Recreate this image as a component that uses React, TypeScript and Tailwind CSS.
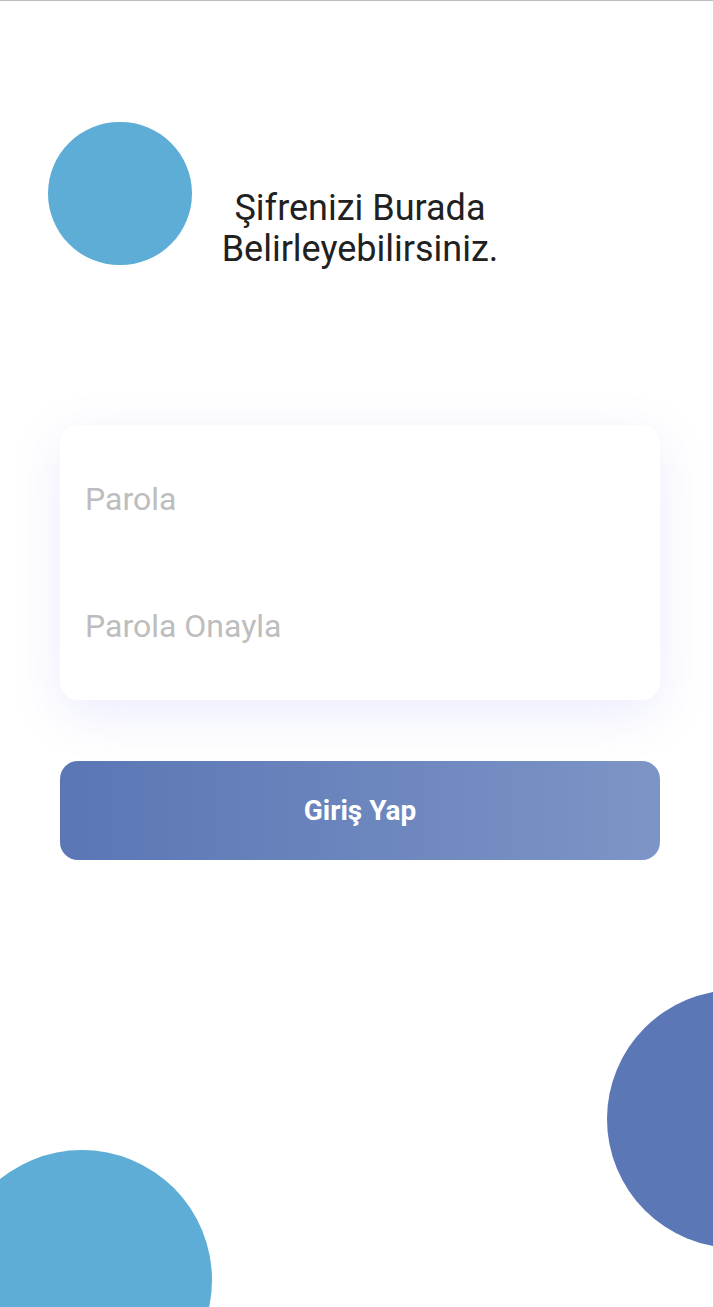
import { useState } from 'react';

export default function App() {
    const [password, setPassword] = useState('');
    const [confirm, setConfirm] = useState('');

    return (
        <div
            className="relative w-full h-[1307px] overflow-hidden bg-white border-t border-[#bdbdbd]"
            style={{ fontFamily: 'Roboto, "Noto Sans", sans-serif' }}
        >
            {/* Decorative circles */}
            <div className="absolute left-[48px] top-[121px] w-[144px] h-[143px] rounded-full bg-[#5eadd6]" />
            <div className="absolute left-[607px] top-[989px] w-[258px] h-[258px] rounded-full bg-[#5b77b5]" />
            <div className="absolute left-[-48px] top-[1149px] w-[260px] h-[260px] rounded-full bg-[#5eadd6]" />

            <div className="relative flex flex-col pl-[60px] pr-[53px] pt-[187px]">
                <h1 className="text-center text-[36px] leading-[41px] font-normal text-[#212121]">
                    Şifrenizi Burada
                    <br />
                    Belirleyebilirsiniz.
                </h1>

                <div className="mt-[155px] flex flex-col bg-white rounded-[18px] py-[10px] px-[25px] shadow-[0_14px_50px_rgba(110,120,240,0.14)]">
                    <input
                        type="password"
                        value={password}
                        onChange={(e) => setPassword(e.target.value)}
                        placeholder="Parola"
                        className="w-full h-[127px] bg-transparent text-[32px] text-[#212121] placeholder:text-[#bdbdbd] outline-none"
                    />
                    <input
                        type="password"
                        value={confirm}
                        onChange={(e) => setConfirm(e.target.value)}
                        placeholder="Parola Onayla"
                        className="w-full h-[128px] bg-transparent text-[32px] text-[#212121] placeholder:text-[#bdbdbd] outline-none"
                    />
                </div>

                <button
                    type="button"
                    className="mt-[61px] w-full h-[99px] rounded-[18px] bg-gradient-to-r from-[#5a76b5] to-[#7d95c6] text-white text-[28px] font-bold"
                >
                    Giriş Yap
                </button>
            </div>
        </div>
    );
}
